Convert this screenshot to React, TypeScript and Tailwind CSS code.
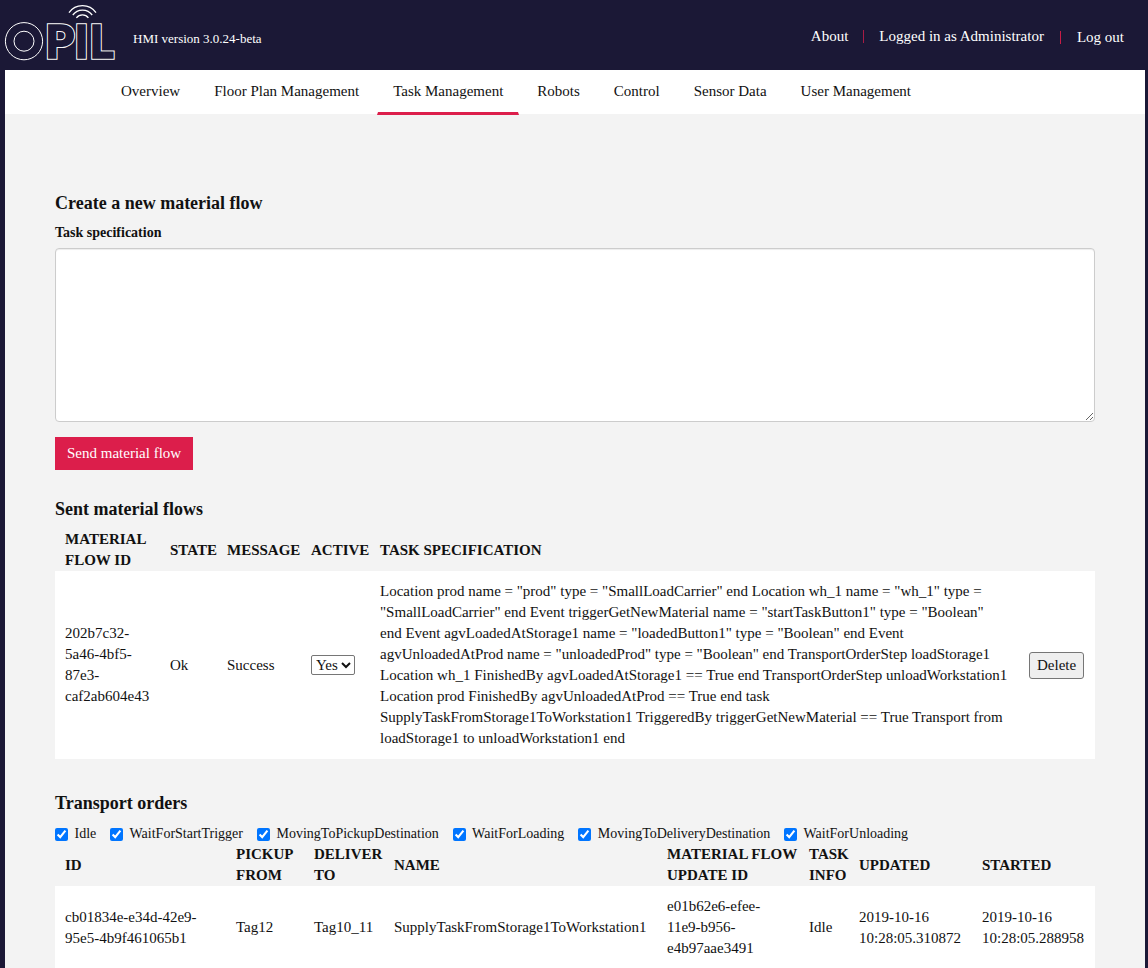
import React from "react";

const navItems = [
  "Overview",
  "Floor Plan Management",
  "Task Management",
  "Robots",
  "Control",
  "Sensor Data",
  "User Management",
];

const orderStates = [
  "Idle",
  "WaitForStartTrigger",
  "MovingToPickupDestination",
  "WaitForLoading",
  "MovingToDeliveryDestination",
  "WaitForUnloading",
];

const materialFlows = [
  {
    id: "202b7c32-5a46-4bf5-87e3-caf2ab604e43",
    state: "Ok",
    message: "Success",
    active: "Yes",
    specification:
      'Location prod name = "prod" type = "SmallLoadCarrier" end Location wh_1 name = "wh_1" type = "SmallLoadCarrier" end Event triggerGetNewMaterial name = "startTaskButton1" type = "Boolean" end Event agvLoadedAtStorage1 name = "loadedButton1" type = "Boolean" end Event agvUnloadedAtProd name = "unloadedProd" type = "Boolean" end TransportOrderStep loadStorage1 Location wh_1 FinishedBy agvLoadedAtStorage1 == True end TransportOrderStep unloadWorkstation1 Location prod FinishedBy agvUnloadedAtProd == True end task SupplyTaskFromStorage1ToWorkstation1 TriggeredBy triggerGetNewMaterial == True Transport from loadStorage1 to unloadWorkstation1 end',
  },
];

const transportOrders = [
  {
    id: "cb01834e-e34d-42e9-95e5-4b9f461065b1",
    pickup: "Tag12",
    deliver: "Tag10_11",
    name: "SupplyTaskFromStorage1ToWorkstation1",
    updateId: "e01b62e6-efee-11e9-b956-e4b97aae3491",
    info: "Idle",
    updated: "2019-10-16 10:28:05.310872",
    started: "2019-10-16 10:28:05.288958",
  },
];

// Letters are outlined by a wide white stroke with a narrower background-coloured one on top.
function Logo() {
  return (
    <svg width="118" height="70" viewBox="0 0 118 70" fill="none" aria-label="OPIL" role="img">
      <defs>
        <g id="logo-letters" fontFamily="Lato, sans-serif" fontWeight="900" fontSize="46">
          <text x="45.2" y="58.2">P</text>
          <text x="74.6" y="58.2">I</text>
          <text x="89.6" y="58.2">L</text>
        </g>
      </defs>
      <g opacity="0.98">
        <use href="#logo-letters" stroke="#ffffff" strokeWidth="3.6" />
        <use href="#logo-letters" stroke="#1b1836" strokeWidth="1.6" fill="#1b1836" />
      </g>
      <g stroke="#ffffff">
        <circle cx="24" cy="41.2" r="18.6" />
        <circle cx="24" cy="41.2" r="10" />
        <path d="M69 12.6C75.5 3.2 89.5 3.2 96 12.6" strokeWidth="1.3" />
        <path d="M72.8 15C77.5 8.4 87.5 8.4 92.2 15" strokeWidth="1.3" />
        <path d="M76.4 17.8C79.5 14 85.5 14 88.4 17.8" strokeWidth="1.3" />
      </g>
    </svg>
  );
}

function Th({ children }: { children?: React.ReactNode }) {
  return <th className="pl-2.5 text-left align-middle font-bold uppercase">{children}</th>;
}

function Td({ children }: { children?: React.ReactNode }) {
  return <td className="py-2.5 pl-2.5 align-middle">{children}</td>;
}

export default function App() {
  return (
    <div className="flex min-h-screen flex-col bg-[#1b1836] pr-[3px] pl-[5px] font-['Liberation_Serif',serif] text-[15px] leading-[21px] text-[#111111]">
      <header className="flex h-[70px] items-center justify-between pr-[21px] text-white">
        <div className="-ml-[5px] flex items-center gap-[15px]">
          <a href="#home" className="block">
            <Logo />
          </a>
          <span className="pt-1.5 text-[13px]">HMI version 3.0.24-beta</span>
        </div>
        <div className="flex items-center gap-4 pt-1">
          <div className="flex items-center gap-[15px] pb-0.5">
            <a href="#about">About</a>
            <span className="h-[13px] w-px bg-[#a81c45]" />
            <span>Logged in as Administrator</span>
          </div>
          <span className="h-[13px] w-px bg-[#c81c46]" />
          <a href="#logout">Log out</a>
        </div>
      </header>

      <nav className="flex h-11 gap-0.5 bg-white pl-[100px]">
        {navItems.map((item) => (
          <a
            key={item}
            href="#nav"
            className={
              item === "Task Management"
                ? "relative -mb-px border-x border-b-[3px] border-x-transparent border-b-[#dc1e4b] px-[15px] pt-[11px]"
                : "px-4 pt-[11px]"
            }
          >
            {item}
          </a>
        ))}
      </nav>

      <main className="grow bg-[#f3f3f3] px-[50px] pt-[79px]">
        <section>
          <h2 className="text-lg leading-5 font-bold">Create a new material flow</h2>
          <form>
            <label htmlFor="spec" className="mt-[10px] mb-[5px] block text-sm leading-5 font-bold">
              Task specification
            </label>
            <textarea
              id="spec"
              className="block h-[174px] w-full rounded border border-[#cccccc] bg-white px-3 py-1.5 shadow-[inset_0_1px_1px_rgba(0,0,0,0.075)]"
            />
            <button type="button" className="mt-[15px] h-[33px] bg-[#dc1e4b] px-3 text-white">
              Send material flow
            </button>
          </form>
        </section>

        <section className="mt-[29px]">
          <h2 className="text-lg leading-5 font-bold">Sent material flows</h2>
          <table className="mt-[10px] w-full table-fixed">
            <colgroup>
              <col className="w-[105px]" />
              <col className="w-[57px]" />
              <col className="w-[84px]" />
              <col className="w-[69px]" />
              <col />
              <col className="w-[76px]" />
            </colgroup>
            <thead>
              <tr>
                <Th>Material Flow ID</Th>
                <Th>State</Th>
                <Th>Message</Th>
                <Th>Active</Th>
                <Th>Task specification</Th>
                <Th />
              </tr>
            </thead>
            <tbody>
              {materialFlows.map((flow) => (
                <tr key={flow.id} className="bg-white">
                  <Td>{flow.id}</Td>
                  <Td>{flow.state}</Td>
                  <Td>{flow.message}</Td>
                  <Td>
                    <select
                      aria-label="Active"
                      defaultValue={flow.active}
                      className="block h-5 rounded-[2px] border border-[#767676] bg-white leading-[18px]"
                    >
                      <option>Yes</option>
                      <option>No</option>
                    </select>
                  </Td>
                  <Td>
                    <div className="pr-2.5">{flow.specification}</div>
                  </Td>
                  <Td>
                    <button
                      type="button"
                      className="block h-[27px] rounded-[3px] border border-[#767676] bg-[#efefef] px-[7px]"
                    >
                      Delete
                    </button>
                  </Td>
                </tr>
              ))}
            </tbody>
          </table>
        </section>

        <section className="mt-[34px]">
          <h2 className="text-lg leading-5 font-bold">Transport orders</h2>
          <div className="mt-[11px] flex h-5 gap-3.5 text-sm leading-5">
            {orderStates.map((state) => (
              <label key={state} className="block whitespace-nowrap">
                <input type="checkbox" defaultChecked className="mr-[3px] h-[13px] w-[13px] align-[-3px]" />{" "}
                {state}
              </label>
            ))}
          </div>
          <table className="w-full table-fixed">
            <colgroup>
              <col className="w-[171px]" />
              <col className="w-[78px]" />
              <col className="w-[80px]" />
              <col />
              <col className="w-[142px]" />
              <col className="w-[50px]" />
              <col className="w-[123px]" />
              <col className="w-[123px]" />
            </colgroup>
            <thead>
              <tr>
                <Th>ID</Th>
                <Th>Pickup from</Th>
                <Th>Deliver to</Th>
                <Th>Name</Th>
                <Th>Material Flow Update ID</Th>
                <Th>Task Info</Th>
                <Th>Updated</Th>
                <Th>Started</Th>
              </tr>
            </thead>
            <tbody>
              {transportOrders.map((order) => (
                <tr key={order.id} className="bg-white">
                  <Td>{order.id}</Td>
                  <Td>{order.pickup}</Td>
                  <Td>{order.deliver}</Td>
                  <Td>{order.name}</Td>
                  <Td>
                    <div className="pr-2.5">{order.updateId}</div>
                  </Td>
                  <Td>{order.info}</Td>
                  <Td>{order.updated}</Td>
                  <Td>{order.started}</Td>
                </tr>
              ))}
            </tbody>
          </table>
        </section>
      </main>
    </div>
  );
}
